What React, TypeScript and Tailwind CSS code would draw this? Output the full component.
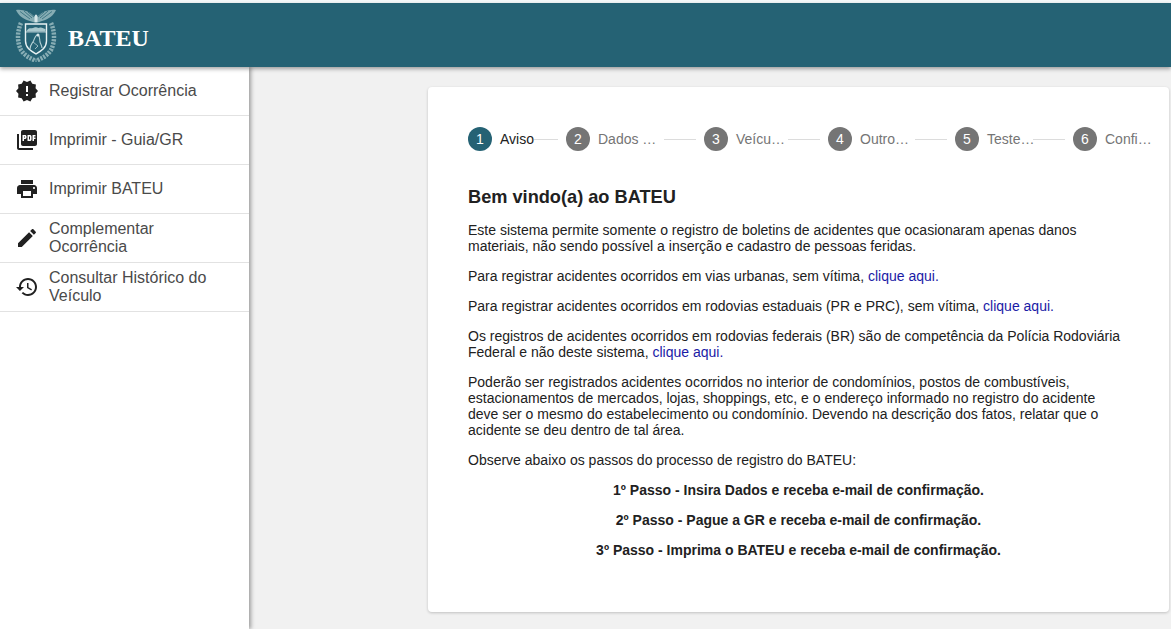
import React from "react";

const Crest = () => (
  <svg width="42" height="54" viewBox="0 0 42 54" fill="none" className="shrink-0">
    {/* eagle */}
    <path d="M1 2 C7 1 14 3 19 8 L21 10 L23 8 C28 3 35 1 41 2 C39 7 34 11 27 13 L21 15 L15 13 C8 11 3 7 1 2Z" fill="#86adb4" />
    <path d="M5 3.5 L15 11 M9 3 L17 10 M13 4 L19 9 M37 3.5 L27 11 M33 3 L25 10 M29 4 L23 9" stroke="#2f6b7a" strokeWidth="0.8" />
    <path d="M19.5 9 C19.5 5.5 22.5 5.5 22.5 9 L22.5 14 L19.5 14Z" fill="#d5e6e8" />
    {/* wreath */}
    <path d="M6 15 C2 24 2 34 6 42 C10 48 15 50 21 53" stroke="#88aeb5" strokeWidth="4.5" strokeDasharray="2.2 1.1" />
    <path d="M36 15 C40 24 40 34 36 42 C32 48 27 50 21 53" stroke="#88aeb5" strokeWidth="4.5" strokeDasharray="2.2 1.1" />
    {/* shield */}
    <path d="M10.5 16 H31.5 V33 C31.5 40 26 43 21 46 C16 43 10.5 40 10.5 33Z" fill="#256274" stroke="#e8f2f3" strokeWidth="1.4" />
    <path d="M11.5 23 C14 19 16 21 18 20 C21 18 23 21 25 19.5 C27 19 29 21 30.5 21 V23.5 H11.5Z" fill="#a9c8cd" />
    <path d="M11 24 H31" stroke="#e8f2f3" strokeWidth="0.7" />
    <path d="M15 41 C15 37 17 36 18.5 33 C19.5 30 21 27 23 26.5 C25 28 24.5 31 25 34 C26 37 27 38 27 40" stroke="#b7d2d6" strokeWidth="1.1" />
    <path d="M18 34 L23 38 L20 41" stroke="#b7d2d6" strokeWidth="0.8" />
    <circle cx="23" cy="27" r="1.5" fill="#d5e6e8" />
  </svg>
);

const icons: Record<string, string> = {
  alert: "M23 12l-2.44-2.78.34-3.68-3.61-.82-1.89-3.18L12 3 8.6 1.54 6.71 4.72l-3.61.81.34 3.68L1 12l2.44 2.78-.34 3.69 3.61.82 1.89 3.18L12 21l3.4 1.46 1.89-3.18 3.61-.82-.34-3.68L23 12zm-10 5h-2v-2h2v2zm0-4h-2V7h2v6z",
  print: "M19 8H5c-1.66 0-3 1.34-3 3v6h4v4h12v-4h4v-6c0-1.66-1.34-3-3-3zm-3 11H8v-5h8v5zm3-7c-.55 0-1-.45-1-1s.45-1 1-1 1 .45 1 1-.45 1-1 1zm-1-9H6v4h12V3z",
  edit: "M3 17.25V21h3.75L17.81 9.94l-3.75-3.75L3 17.25zM20.71 7.04c.39-.39.39-1.02 0-1.41l-2.34-2.34c-.39-.39-1.02-.39-1.41 0l-1.83 1.83 3.75 3.75 1.83-1.83z",
  pdf: "M20 2H8c-1.1 0-2 .9-2 2v12c0 1.1.9 2 2 2h12c1.1 0 2-.9 2-2V4c0-1.1-.9-2-2-2zm-8.5 7.5c0 .83-.67 1.5-1.5 1.5H9v2H7.5V7H10c.83 0 1.5.67 1.5 1.5v1zm5 2c0 .83-.67 1.5-1.5 1.5h-2.5V7H15c.83 0 1.5.67 1.5 1.5v3zm4-3H19v1h1.5V11H19v2h-1.5V7h3v1.5zM9 9.5h1v-1H9v1zM4 6H2v14c0 1.1.9 2 2 2h14v-2H4V6zm10 5.5h1v-3h-1v3z",
  history: "M13 3c-4.97 0-9 4.03-9 9H1l3.89 3.89.07.14L9 12H6c0-3.87 3.13-7 7-7s7 3.13 7 7-3.13 7-7 7c-1.93 0-3.68-.79-4.94-2.06l-1.42 1.42C8.27 19.99 10.51 21 13 21c4.97 0 9-4.03 9-9s-4.03-9-9-9zm-1 5v5l4.28 2.54.72-1.21-3.5-2.08V8H12z",
};

const menu: [string, string][] = [
  ["alert", "Registrar Ocorrência"],
  ["pdf", "Imprimir - Guia/GR"],
  ["print", "Imprimir BATEU"],
  ["edit", "Complementar Ocorrência"],
  ["history", "Consultar Histórico do Veículo"],
];

const steps: { n: number; label: string; w: string; line?: string; gapL?: string; active?: boolean }[] = [
  { n: 1, label: "Aviso", w: "w-[34px]", line: "w-[24px]", gapL: "ml-0", active: true },
  { n: 2, label: "Dados …", w: "w-[58px]", line: "w-[32px]", gapL: "ml-[8px]" },
  { n: 3, label: "Veícu…", w: "w-[48px]", line: "w-[32px]", gapL: "ml-[4px]" },
  { n: 4, label: "Outro…", w: "w-[48px]", line: "w-[32px]", gapL: "ml-[7px]" },
  { n: 5, label: "Teste…", w: "w-[46px]", line: "w-[32px]", gapL: "ml-0" },
  { n: 6, label: "Confi…", w: "w-[46px]" },
];

const A = ({ children }: { children: React.ReactNode }) => (
  <a className="text-[#1a1aa6]" href="#">{children}</a>
);

export default function App() {
  return (
    <div className="h-[629px] w-[1171px] overflow-hidden bg-[#f1f1f1] font-['Liberation_Sans',Arial,sans-serif] text-[14px] leading-4 text-[#212121]">
      <div className="h-[3px] bg-[#f4f8f9]" />
      <header className="relative z-20 flex h-16 items-center bg-[#256274] pl-[15px] shadow-[0_2px_4px_rgba(0,0,0,0.35)]">
        <Crest />
        <span className="ml-[11px] mt-[6px] font-['Liberation_Serif',serif] text-[24px] font-bold leading-6 text-white">BATEU</span>
      </header>
      <div className="flex h-[562px]">
        <nav className="relative z-10 w-[249px] shrink-0 bg-white shadow-[2px_0_4px_rgba(0,0,0,0.35)]">
          {menu.map(([icon, label]) => (
            <div key={label} className="flex h-[49px] items-center border-b border-[#e2e2e2] pl-[15px] pr-4 text-[16px] leading-[18px] text-[#4a4a4a]">
              <svg viewBox="0 0 24 24" width="24" height="24" className="shrink-0" fill="#212121"><path d={icons[icon]} /></svg>
              <span className="ml-[10px]">{label}</span>
            </div>
          ))}
        </nav>
        <main className="flex-1 pl-[179px] pr-[2px] pt-5">
          <section className="h-[525px] rounded bg-white pl-10 pr-[18px] pt-10 shadow-[0_1px_3px_rgba(0,0,0,0.2)]">
            <div className="flex h-6 items-center">
              {steps.map((s) => (
                <React.Fragment key={s.n}>
                  <span className={`flex h-6 w-6 shrink-0 items-center justify-center rounded-full text-white ${s.active ? "bg-[#256274]" : "bg-[#757575]"}`}>{s.n}</span>
                  <span className={`ml-2 whitespace-nowrap ${s.w} ${s.active ? "text-[#212121]" : "text-[#757575]"}`}>{s.label}</span>
                  {s.line && <span className={`${s.gapL} mr-2 h-px ${s.line} bg-[#dcdcdc]`} />}
                </React.Fragment>
              ))}
            </div>
            <div className="mt-[36px] w-[661px]">
              <h1 className="mb-[15px] text-[18.2px] font-bold leading-5">Bem vindo(a) ao BATEU</h1>
              <p className="mb-[14px]">Este sistema permite somente o registro de boletins de acidentes que ocasionaram apenas danos materiais, não sendo possível a inserção e cadastro de pessoas feridas.</p>
              <p className="mb-[14px]">Para registrar acidentes ocorridos em vias urbanas, sem vítima, <A>clique aqui.</A></p>
              <p className="mb-[14px]">Para registrar acidentes ocorridos em rodovias estaduais (PR e PRC), sem vítima, <A>clique aqui.</A></p>
              <p className="mb-[14px]">Os registros de acidentes ocorridos em rodovias federais (BR) são de competência da Polícia Rodoviária Federal e não deste sistema, <A>clique aqui.</A></p>
              <p className="mb-[14px] pr-[6px]">Poderão ser registrados acidentes ocorridos no interior de condomínios, postos de combustíveis, estacionamentos de mercados, lojas, shoppings, etc, e o endereço informado no registro do acidente deve ser o mesmo do estabelecimento ou condomínio. Devendo na descrição dos fatos, relatar que o acidente se deu dentro de tal área.</p>
              <p className="mb-[14px]">Observe abaixo os passos do processo de registro do BATEU:</p>
              <p className="mb-[14px] text-center font-bold">1º Passo - Insira Dados e receba e-mail de confirmação.</p>
              <p className="mb-[14px] text-center font-bold">2º Passo - Pague a GR e receba e-mail de confirmação.</p>
              <p className="text-center font-bold">3º Passo - Imprima o BATEU e receba e-mail de confirmação.</p>
            </div>
          </section>
        </main>
      </div>
    </div>
  );
}
